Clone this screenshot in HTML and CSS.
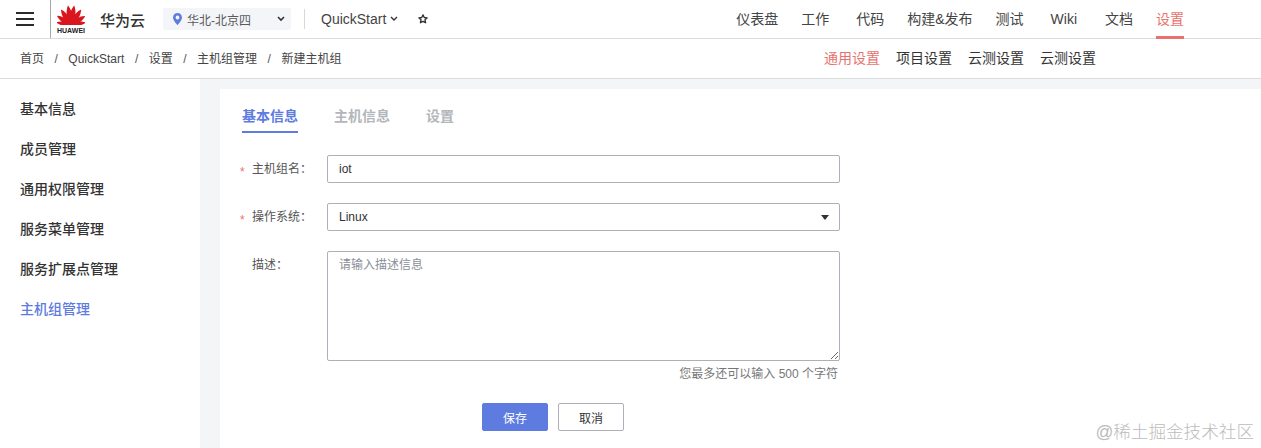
FILE: index.html
```html
<!DOCTYPE html>
<html lang="zh-CN">
<head>
<meta charset="utf-8">
<title>新建主机组</title>
<link rel="stylesheet" href="styles.css">
</head>
<body>
<header class="topbar">
  <div class="burger"><span></span><span></span><span></span></div>
  <div class="brand">
    <div class="logo">
      <svg class="petals" viewBox="0 0 28 20" width="28" height="20">
        <g fill="#d9161e" transform="translate(14 20)">
          <path transform="rotate(-9)" d="M-.2 0C-3.2-5-3.8-13-.2-19.4 0-19.6.2-19.6.4-19.4 3.8-13 3.2-5 .2 0Z"/>
          <path transform="rotate(9)" d="M-.2 0C-3.2-5-3.8-13-.2-19.4 0-19.6.2-19.6.4-19.4 3.8-13 3.2-5 .2 0Z"/>
          <path transform="rotate(-33)" d="M-.2 0C-3.2-5-3.6-12-.2-18 0-18.2.2-18.2.4-18 3.6-12 3.2-5 .2 0Z"/>
          <path transform="rotate(33)" d="M-.2 0C-3.2-5-3.6-12-.2-18 0-18.2.2-18.2.4-18 3.6-12 3.2-5 .2 0Z"/>
          <path transform="rotate(-57)" d="M-.2 0C-2.9-5-3.2-11-.2-16.4 0-16.6.2-16.6.4-16.4 3.2-11 2.9-5 .2 0Z"/>
          <path transform="rotate(57)" d="M-.2 0C-2.9-5-3.2-11-.2-16.4 0-16.6.2-16.6.4-16.4 3.2-11 2.9-5 .2 0Z"/>
          <path transform="rotate(-80)" d="M-.2 0C-2.4-5-2.6-10-.2-14.6 0-14.8.2-14.8.4-14.6 2.6-10 2.4-5 .2 0Z"/>
          <path transform="rotate(80)" d="M-.2 0C-2.4-5-2.6-10-.2-14.6 0-14.8.2-14.8.4-14.6 2.6-10 2.4-5 .2 0Z"/>
        </g>
      </svg>
      <span class="logo-word">HUAWEI</span>
    </div>
    <span class="cloud">华为云</span>
  </div>
  <div class="region">
    <svg class="pin" viewBox="0 0 9 12" width="9" height="12"><path fill="#5e7ce0" fill-rule="evenodd" d="M4.5 0C2 0 0 2 0 4.4 0 7.6 4.5 12 4.5 12S9 7.6 9 4.4C9 2 7 0 4.5 0ZM4.5 2.6A1.9 1.9 0 1 1 4.5 6.4 1.9 1.9 0 0 1 4.5 2.6Z"/></svg>
    <span class="region-name">华北-北京四</span>
    <svg class="chev" viewBox="0 0 8 6" width="8" height="6"><path d="M1 1l3 3 3-3" fill="none" stroke="#333" stroke-width="1.6"/></svg>
  </div>
  <i class="vline"></i>
  <div class="project">
    <span>QuickStart</span>
    <svg class="chev" viewBox="0 0 8 6" width="8" height="6"><path d="M1 1l3 3 3-3" fill="none" stroke="#333" stroke-width="1.4"/></svg>
  </div>
  <svg class="star" viewBox="0 0 12 12" width="10" height="10"><path d="M6 1l1.5 3.2 3.5.4-2.6 2.4.7 3.5L6 8.8 2.9 10.5l.7-3.5L1 4.6l3.5-.4z" fill="none" stroke="#333" stroke-width="1.6" stroke-linejoin="round"/></svg>
  <nav class="mainnav">
    <a>仪表盘</a>
    <a>工作</a>
    <a class="far">代码</a>
    <a>构建&amp;发布</a>
    <a>测试</a>
    <a class="far">Wiki</a>
    <a class="farther">文档</a>
    <a class="on">设置</a>
  </nav>
</header>
<div class="subbar">
  <ol class="crumbs">
    <li>首页</li><li>QuickStart</li><li>设置</li><li>主机组管理</li><li>新建主机组</li>
  </ol>
  <nav class="subnav">
    <a class="on">通用设置</a><a>项目设置</a><a>云测设置</a><a>云测设置</a>
  </nav>
</div>
<div class="body">
  <aside class="side">
    <a>基本信息</a>
    <a>成员管理</a>
    <a>通用权限管理</a>
    <a>服务菜单管理</a>
    <a>服务扩展点管理</a>
    <a class="on">主机组管理</a>
  </aside>
  <main class="panel">
    <div class="tabs">
      <a class="on">基本信息</a><a>主机信息</a><a>设置</a>
    </div>
    <form class="form">
      <div class="row">
        <label class="lab req">主机组名：</label>
        <input class="ctl" type="text" value="iot">
      </div>
      <div class="row">
        <label class="lab req">操作系统：</label>
        <div class="selwrap">
          <select class="ctl sel"><option>Linux</option></select>
          <i class="caret"></i>
        </div>
      </div>
      <div class="row last">
        <label class="lab">描述：</label>
        <textarea class="ctl area" placeholder="请输入描述信息"></textarea>
      </div>
      <p class="hint">您最多还可以输入 500 个字符</p>
      <div class="btns">
        <button type="button" class="btn primary">保存</button>
        <button type="button" class="btn">取消</button>
      </div>
    </form>
  </main>
</div>
<div class="mark">@稀土掘金技术社区</div>
</body>
</html>
```
FILE: styles.css
```css
* { box-sizing: border-box; }
html, body { margin: 0; height: 448px; overflow: hidden; }
body {
  font-family: "Liberation Sans", "Noto Sans CJK SC", sans-serif;
  font-size: 12px;
  color: #333;
  background: #fff;
  position: relative;
}
a { color: inherit; text-decoration: none; }

.topbar {
  height: 39px;
  display: flex;
  align-items: center;
  border-bottom: 1px solid #dcdcdc;
}
.burger {
  width: 50px;
  padding-left: 16px;
  display: flex;
  flex-direction: column;
  gap: 4px;
  margin-top: -1px;
}
.burger span { display: block; width: 18px; height: 2px; background: #2b2b2b; }
.brand {
  height: 38px;
  border-left: 1px solid #a8a8a8;
  display: flex;
  align-items: center;
  padding-left: 6px;
  width: 113px;
}
.logo { width: 28px; display: flex; flex-direction: column; align-items: center; }
.petals { display: block; }
.logo-word { font-size: 7px; line-height: 7px; margin-top: 2px; color: #222; font-weight: 700; white-space: nowrap; }
.cloud { margin-left: 15px; font-size: 15px; font-weight: 500; color: #333; }
.region {
  width: 128px;
  height: 22px;
  background: #f3f5f8;
  border-radius: 2px;
  display: flex;
  align-items: center;
  padding: 0 6px 0 10px;
  color: #5a5a5a;
}
.region-name { margin-left: 5px; flex: 1; }
.vline { width: 1px; height: 20px; background: #d8d8d8; margin: 0 16px 0 13px; }
.project { display: flex; align-items: center; gap: 4px; font-size: 14px; color: #444; }
.star { margin-left: 20px; }
.mainnav { margin-left: auto; margin-right: 77px; height: 38px; display: flex; gap: 23px; font-size: 14px; color: #444; }
.mainnav a { line-height: 38px; height: 39px; }
.mainnav a.far { margin-left: 4px; }
.mainnav a.farther { margin-left: 5px; }
.mainnav a.on { color: #e8736e; border-bottom: 3px solid #e8736e; }

.subbar {
  height: 40px;
  border-bottom: 1px solid #dcdcdc;
  display: flex;
  align-items: center;
  justify-content: space-between;
  padding: 0 165px 0 20px;
}
.crumbs { display: flex; align-items: center; margin: 0; padding: 0; list-style: none; color: #444; line-height: 16px; }
.crumbs li { height: 16px; white-space: nowrap; }
.crumbs li + li::before { content: "/"; margin: 0 10.5px; color: #555; }
.subnav { display: flex; gap: 16px; font-size: 14px; line-height: 18px; margin-top: -2px; color: #333; }
.subnav .on { color: #e8736e; }

.body { display: flex; height: 369px; }
.side { width: 200px; padding-top: 10px; display: flex; flex-direction: column; }
.side a { height: 40px; line-height: 40px; padding-left: 20px; font-size: 14px; font-weight: 500; color: #333; }
.side a.on { color: #5e7ce0; }

.panel {
  flex: 1;
  border-top: 10px solid #f3f5f7;
  border-left: 20px solid #f3f5f7;
  padding: 0 0 0 22px;
}
.tabs { display: flex; gap: 36px; height: 44px; padding-top: 16px; font-size: 14px; font-weight: 700; color: #b3b6bb; }
.tabs a { height: 28px; line-height: 22px; }
.tabs a.on { color: #5e7ce0; border-bottom: 2px solid #5e7ce0; }

.form { width: 598px; padding-top: 22px; }
.row { display: flex; align-items: center; height: 28px; margin-bottom: 20px; }
.row.last { height: 110px; margin-bottom: 0; align-items: flex-start; }
.lab { width: 85px; padding-left: 10px; color: #555; position: relative; line-height: 28px; }
.lab.req::before {
  content: "*";
  position: absolute;
  left: -2px;
  top: 3px;
  color: #e8736e;
}
.ctl {
  width: 513px;
  height: 28px;
  border: 1px solid #adb0b8;
  border-radius: 2px;
  padding: 0 11px;
  font: inherit;
  color: #333;
  background: #fff;
  outline: 0;
  display: block;
}
.selwrap { position: relative; }
.sel { appearance: none; }
.caret {
  position: absolute;
  right: 11px;
  top: 12px;
  border: 4.5px solid transparent;
  border-top: 5px solid #333;
  border-bottom: 0;
}
.area { height: 110px; padding: 3px 11px; resize: vertical; }
.area::placeholder { color: #8a8e99; opacity: 1; }
.hint { margin: 6px 0 0; height: 14px; line-height: 14px; text-align: right; padding-right: 2px; color: #777; }
.btns { display: flex; gap: 10px; margin-top: 22px; padding-left: 240px; }
.btn {
  width: 66px;
  height: 28px;
  border: 1px solid #adb0b8;
  border-radius: 2px;
  background: #fff;
  font: inherit;
  color: #333;
  padding: 0;
}
.btn.primary { background: #5e7ce0; border-color: #5e7ce0; color: #fff; }

.mark {
  position: absolute;
  right: 7px;
  bottom: 4px;
  font-size: 17.6px;
  line-height: 24px;
  font-weight: 300;
  color: #bcbcbc;
}
```
